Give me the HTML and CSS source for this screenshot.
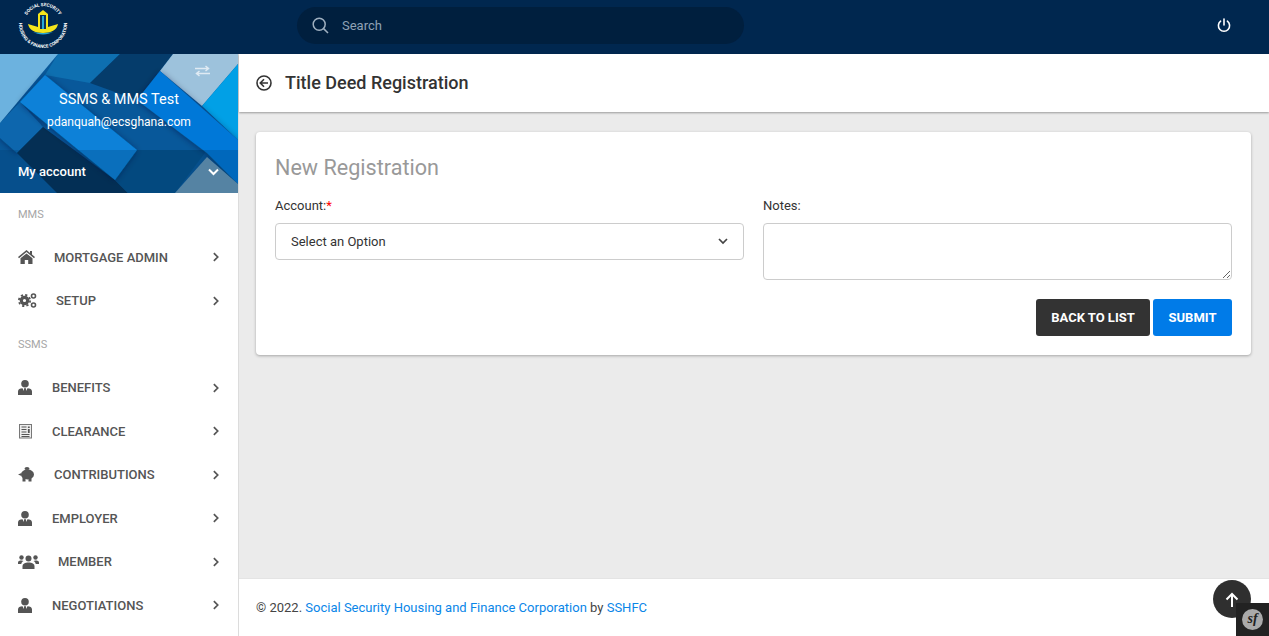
FILE: index.html
```html
<!DOCTYPE html>
<html lang="en">
<head>
    <meta charset="UTF-8">
    <meta name="viewport" content="width=device-width, initial-scale=1.0">
    <title>Title Deed Registration</title>
    <link rel="stylesheet" href="styles.css">
</head>
<body>
    <header class="topbar">
        <div class="logo-box">
            <svg class="logo" width="50" height="48" viewBox="0 0 50 48">
                <defs>
                    <path id="logo-top" d="M7 18A19 19 0 0 1 43 18"/>
                    <path id="logo-bottom" d="M2 16A24 24 0 1 0 48 16"/>
                </defs>
                <text class="logo-text"><textPath href="#logo-top" startOffset="50%" text-anchor="middle">SOCIAL SECURITY</textPath></text>
                <text class="logo-text"><textPath href="#logo-bottom" startOffset="50%" text-anchor="middle">HOUSING &amp; FINANCE CORPORATION</textPath></text>
                <path d="M10 23c3 1 7 2 10 3h10c3-1 7-2 10-3-1 6-7 9-15 9s-14-3-15-9z" fill="#f4e51c"/>
                <path d="M15 31c3 1.500 6 2.500 10 2.500s7-1 10-2.500c-3 .6-6 1-10 1s-7-.4-10-1z" fill="#29a9d8"/>
                <path d="M20 27V13l5-4 5 4v14z" fill="#f4e51c"/>
                <path d="M22 28V14h6v14z" fill="#0b2f57"/>
                <path d="M24 15h2v13h-2z" fill="#29a9d8"/>
            </svg>
        </div>
        <div class="search">
            <svg width="17" height="17" viewBox="0 0 17 17" fill="none" stroke="#9fb0c0" stroke-width="1.500"><circle cx="7.200" cy="7.200" r="6"/><path d="M11.600 11.600l4.400 4.400"/></svg>
            <span>Search</span>
        </div>
        <svg class="power" width="14" height="15" viewBox="0 0 14 15" fill="none" stroke="#fff" stroke-width="1.600" stroke-linecap="round"><path d="M7 1v6"/><path d="M3.600 3.200a5.600 5.600 0 1 0 6.800 0"/></svg>
    </header>

    <div class="layout">
        <aside class="sidebar">
            <div class="profile">
                <svg class="profile-bg" width="238" height="139" viewBox="0 0 238 139">
                    <defs>
                        <filter id="soft" x="-20%" y="-20%" width="140%" height="140%"><feDropShadow dx="0" dy="1" stdDeviation="3" flood-color="#001a33" flood-opacity=".45"/></filter>
                    </defs>
                    <rect width="238" height="139" fill="#08589a"/>
                    <path d="M58 0H120L90 29 45 21z" fill="#0e6fb0"/>
                    <path d="M120 0H173L137 46 90 29z" fill="#053c6b"/>
                    <path d="M0 69L20 48 43 73 17 99 0 84z" fill="#0a66ad" filter="url(#soft)"/>
                    <path d="M0 0H58L0 69z" fill="#6cb2df"/>
                    <path d="M173 0H238V10L202 52 160 17z" fill="#9dc2dc"/>
                    <path d="M202 52L238 10V86z" fill="#01a0e6"/>
                    <path d="M43 73L115 126 128 139H57L17 99z" fill="#052f54"/>
                    <path d="M137 96H207L175 139H128L115 126z" fill="#04508a"/>
                    <path d="M160 17L238 86V130L207 99 137 46z" fill="#0078d8" filter="url(#soft)"/>
                    <path d="M45 21L137 96 115 126 20 48z" fill="#0881d8" filter="url(#soft)"/>
                    <path d="M207 103L238 130V139H175z" fill="#6d9ab8"/>
                    <rect y="96" width="238" height="43" fill="#00325a" opacity=".22"/>
                </svg>
                <svg class="swap" width="15" height="12" viewBox="0 0 15 12" fill="none" stroke="#dfeaf3" stroke-width="1.500"><path d="M0 3.500h13M10.500 1l3 2.500-3 2.500"/><path d="M15 8.500H2M4.500 6l-3 2.500 3 2.500"/></svg>
                <div class="profile-name">SSMS &amp; MMS Test</div>
                <div class="profile-mail">pdanquah@ecsghana.com</div>
                <div class="profile-account">
                    <span>My account</span>
                    <svg width="11" height="8" viewBox="0 0 11 8" fill="none" stroke="#fff" stroke-width="2"><path d="M1 1.500l4.500 4.500 4.500-4.500"/></svg>
                </div>
            </div>

            <nav class="menu">
                <div class="menu-label">MMS</div>
                <a class="menu-item">
                    <svg width="17" height="14" viewBox="0 0 17 14" fill="#555"><path d="M8.500 0L0 7l1 1.200L8.500 2l7.500 6.200L17 7l-3-2.500V1h-2v1.900z"/><path d="M8.500 3.400L2.500 8.300V14h4.300v-4h3.400v4h4.300V8.300z"/></svg>
                    <span>MORTGAGE ADMIN</span>
                    <svg class="chevron" width="6" height="10" viewBox="0 0 7 11" fill="none" stroke="#555" stroke-width="2"><path d="M1 1l4.500 4.500L1 10"/></svg>
                </a>
                <a class="menu-item">
                    <svg width="19" height="15" viewBox="0 0 19 15" fill="none" stroke="#555"><circle cx="6.500" cy="7.500" r="3.200" stroke-width="3.200"/><circle cx="6.500" cy="7.500" r="5.600" stroke-width="1.800" stroke-dasharray="2.200 2.200"/><circle cx="15.500" cy="3" r="2" stroke-width="1.600"/><circle cx="15.500" cy="12" r="2" stroke-width="1.600"/></svg>
                    <span>SETUP</span>
                    <svg class="chevron" width="6" height="10" viewBox="0 0 7 11" fill="none" stroke="#555" stroke-width="2"><path d="M1 1l4.500 4.500L1 10"/></svg>
                </a>
                <div class="menu-label">SSMS</div>
                <a class="menu-item">
                    <svg width="15" height="15" viewBox="0 0 15 15" fill="#555"><circle cx="7" cy="3.800" r="3.800"/><path d="M0 15v-3.500C0 9 2 8.300 4.500 8.300L6 11V8.300h2V11l1.500-2.700C12 8.300 14 9 14 11.500V15z"/></svg>
                    <span>BENEFITS</span>
                    <svg class="chevron" width="6" height="10" viewBox="0 0 7 11" fill="none" stroke="#555" stroke-width="2"><path d="M1 1l4.500 4.500L1 10"/></svg>
                </a>
                <a class="menu-item">
                    <svg width="15" height="15" viewBox="0 0 15 15" fill="none" stroke="#555"><rect x="1.500" y=".5" width="12" height="13.500" fill="#eee" stroke="#777"/><path d="M3.500 3h5M3.500 5.500h5M3.500 8h5M3.500 10.500h8M3.500 12.500h8" stroke-width="1.100"/><path d="M10.800 2.500v1.500M10.800 5v4" stroke-width="1.800"/></svg>
                    <span>CLEARANCE</span>
                    <svg class="chevron" width="6" height="10" viewBox="0 0 7 11" fill="none" stroke="#555" stroke-width="2"><path d="M1 1l4.500 4.500L1 10"/></svg>
                </a>
                <a class="menu-item">
                    <svg width="17" height="15" viewBox="0 0 17 15" fill="#555"><ellipse cx="9.500" cy="7.500" rx="6.500" ry="5"/><ellipse cx="9" cy="1.600" rx="2.500" ry="1.500"/><path d="M0 7.500l3.500-1.500v3zM4.500 10h3v4.500h-3zM10.500 10h3v4.500h-3z"/></svg>
                    <span>CONTRIBUTIONS</span>
                    <svg class="chevron" width="6" height="10" viewBox="0 0 7 11" fill="none" stroke="#555" stroke-width="2"><path d="M1 1l4.500 4.500L1 10"/></svg>
                </a>
                <a class="menu-item">
                    <svg width="15" height="15" viewBox="0 0 15 15" fill="#555"><circle cx="7" cy="3.800" r="3.800"/><path d="M0 15v-3.500C0 9 2 8.300 4.500 8.300L6 11V8.300h2V11l1.500-2.700C12 8.300 14 9 14 11.500V15z"/></svg>
                    <span>EMPLOYER</span>
                    <svg class="chevron" width="6" height="10" viewBox="0 0 7 11" fill="none" stroke="#555" stroke-width="2"><path d="M1 1l4.500 4.500L1 10"/></svg>
                </a>
                <a class="menu-item">
                    <svg width="21" height="14" viewBox="0 0 21 14" fill="#555"><circle cx="10.500" cy="3.500" r="3"/><path d="M4.500 14v-2.500c0-3 2.500-4 6-4s6 1 6 4V14z"/><circle cx="3.500" cy="2.500" r="2.200"/><circle cx="17.500" cy="2.500" r="2.200"/><path d="M0 9V7.500C0 6 1.500 5.500 3.500 5.500c1 0 1.500.2 2 .5-1.300.7-2 1.700-2.200 3zM21 9V7.500c0-1.500-1.500-2-3.500-2-1 0-1.500.2-2 .5 1.300.7 2 1.700 2.200 3z"/></svg>
                    <span>MEMBER</span>
                    <svg class="chevron" width="6" height="10" viewBox="0 0 7 11" fill="none" stroke="#555" stroke-width="2"><path d="M1 1l4.500 4.500L1 10"/></svg>
                </a>
                <a class="menu-item">
                    <svg width="15" height="15" viewBox="0 0 15 15" fill="#555"><circle cx="7" cy="3.800" r="3.800"/><path d="M0 15v-3.500C0 9 2 8.300 4.500 8.300L6 11V8.300h2V11l1.500-2.700C12 8.300 14 9 14 11.500V15z"/></svg>
                    <span>NEGOTIATIONS</span>
                    <svg class="chevron" width="6" height="10" viewBox="0 0 7 11" fill="none" stroke="#555" stroke-width="2"><path d="M1 1l4.500 4.500L1 10"/></svg>
                </a>
            </nav>
        </aside>

        <main class="main">
            <div class="page-title">
                <svg width="16" height="16" viewBox="0 0 16 16" fill="none" stroke="#333" stroke-width="1.600"><circle cx="8" cy="8" r="7"/><path d="M12 8H4.500M8 4.300L4.300 8 8 11.700"/></svg>
                <h1>Title Deed Registration</h1>
            </div>

            <div class="content">
                <section class="card">
                    <h2>New Registration</h2>
                    <div class="form-grid">
                        <div class="field">
                            <label>Account:<span class="required">*</span></label>
                            <div class="select-box">
                                <span>Select an Option</span>
                                <svg width="10" height="7" viewBox="0 0 10 7" fill="none" stroke="#444" stroke-width="1.700"><path d="M1 1l4 4 4-4"/></svg>
                            </div>
                        </div>
                        <div class="field">
                            <label for="notes">Notes:</label>
                            <textarea id="notes" class="notes"></textarea>
                        </div>
                    </div>
                    <div class="actions">
                        <button class="button button-dark">BACK TO LIST</button>
                        <button class="button button-blue">SUBMIT</button>
                    </div>
                </section>
            </div>

            <footer class="footer">
                © 2022.&nbsp;<a href="#">Social Security Housing and Finance Corporation</a>&nbsp;by&nbsp;<a href="#">SSHFC</a>
            </footer>
        </main>
    </div>

    <button class="to-top">
        <svg width="14" height="15" viewBox="0 0 14 15" fill="none" stroke="#fff" stroke-width="2"><path d="M7 15V2M1.500 7.500L7 2l5.500 5.500"/></svg>
    </button>
    <div class="sf-toolbar"><span class="sf-logo">sf</span></div>
</body>
</html>
```

FILE: styles.css
```css
* {
    box-sizing: border-box;
}
html, body {
    height: 100%;
}
body {
    font-family: Roboto, "Liberation Sans", sans-serif;
    margin: 0;
    display: flex;
    flex-direction: column;
    overflow: hidden;
    background-color: #ebebeb;
    color: #333;
}

/* top bar */
.topbar {
    height: 54px;
    flex: none;
    display: flex;
    align-items: center;
    padding-bottom: 4px;
    background-color: #00274f;
}
.logo-box {
    width: 297px;
    flex: none;
    padding-left: 18px;
}
.logo {
    display: block;
    overflow: visible;
}
.logo-text {
    font-size: 4.600px;
    font-weight: 700;
    fill: #fff;
}
.search {
    width: 447px;
    height: 37px;
    display: flex;
    align-items: center;
    gap: 13px;
    padding-left: 15px;
    border-radius: 19px;
    background-color: #001f3e;
    color: #8fa2b5;
    font-size: 13px;
}
.power {
    margin-left: auto;
    margin-right: 38px;
}

.layout {
    flex: 1;
    display: flex;
    min-height: 0;
}

/* sidebar */
.sidebar {
    width: 239px;
    flex: none;
    background-color: white;
    border-right: 1px solid #dcdcdc;
    overflow: hidden;
}
.profile {
    position: relative;
    height: 139px;
    color: white;
    text-align: center;
}
.profile-bg {
    position: absolute;
    top: 0;
    left: 0;
}
.swap {
    position: absolute;
    top: 11px;
    right: 28px;
}
.profile-name, .profile-mail, .profile-account {
    position: relative;
}
.profile-name {
    padding-top: 37px;
    font-size: 14.500px;
    line-height: 18px;
}
.profile-mail {
    margin-top: 4px;
    font-size: 12.100px;
    line-height: 18px;
}
.profile-account {
    margin-top: 19px;
    height: 43px;
    display: flex;
    align-items: center;
    justify-content: space-between;
    padding: 0 19px 0 18px;
    font-size: 13px;
    font-weight: 500;
}
.menu-label {
    height: 43.500px;
    display: flex;
    align-items: center;
    padding-left: 18px;
    color: #a6a6a6;
    font-size: 11px;
}
.menu-label:first-child {
    height: 42.500px;
}
.menu-item {
    height: 43.500px;
    display: flex;
    align-items: center;
    gap: 19px;
    padding: 0 19.500px 0 18px;
    color: #555;
    font-size: 13px;
    font-weight: 500;
}
.chevron {
    margin-left: auto;
}

/* main column */
.main {
    flex: 1;
    min-width: 0;
    display: flex;
    flex-direction: column;
}
.page-title {
    height: 58px;
    flex: none;
    display: flex;
    align-items: center;
    gap: 13px;
    padding: 0 0 1px 17px;
    background-color: white;
    box-shadow: 0 1px 2px rgba(0, 0, 0, 0.35);
}
h1 {
    margin: 0;
    font-size: 18px;
    font-weight: 500;
    color: #333;
}
.content {
    flex: 1;
    padding: 20px 18px 0 17px;
}
.card {
    height: 223px;
    padding: 19px;
    background-color: white;
    border-radius: 4px;
    box-shadow: 0 1px 3px rgba(0, 0, 0, 0.3);
}
h2 {
    margin: 1px 0 0;
    font-size: 21.600px;
    font-weight: 400;
    line-height: 32px;
    color: #999;
}
.form-grid {
    display: grid;
    grid-template-columns: 1fr 1fr;
    gap: 19px;
    margin-top: 14px;
}
.field label {
    display: block;
    font-size: 13px;
    line-height: 16px;
    margin-bottom: 9px;
}
.required {
    color: red;
}
.select-box {
    height: 37px;
    display: flex;
    align-items: center;
    justify-content: space-between;
    padding: 0 15px;
    border: 1px solid #ccc;
    border-radius: 4px;
    font-size: 13px;
}
.notes {
    display: block;
    width: 100%;
    height: 57px;
    border: 1px solid #ccc;
    border-radius: 4px;
}
.actions {
    display: flex;
    justify-content: flex-end;
    gap: 3px;
    margin-top: 19px;
}
.button {
    height: 37px;
    border: none;
    border-radius: 3px;
    color: white;
    font-family: inherit;
    font-size: 13px;
    font-weight: 700;
    cursor: pointer;
}
.button-dark {
    width: 114px;
    background-color: #333;
}
.button-blue {
    width: 79px;
    background-color: #007be8;
}

.footer {
    height: 58px;
    flex: none;
    display: flex;
    align-items: center;
    padding-left: 17px;
    background-color: white;
    border-top: 1px solid #e4e4e4;
    font-size: 13px;
    color: #444;
}
.footer a {
    color: #0a86e8;
    text-decoration: none;
}

/* floating bits */
.to-top {
    position: fixed;
    left: 1213px;
    top: 580px;
    width: 38px;
    height: 38px;
    padding: 0;
    display: flex;
    align-items: center;
    justify-content: center;
    border: none;
    border-radius: 50%;
    background-color: #2f2f2f;
}
.sf-toolbar {
    position: fixed;
    right: 0;
    bottom: 0;
    width: 33px;
    height: 33px;
    display: flex;
    align-items: center;
    justify-content: center;
    background-color: #222;
}
.sf-logo {
    width: 21px;
    height: 21px;
    border-radius: 50%;
    background-color: #aaa;
    color: #222;
    font-family: "Liberation Serif", serif;
    font-style: italic;
    font-weight: 700;
    font-size: 14px;
    line-height: 20px;
    text-align: center;
}
```
